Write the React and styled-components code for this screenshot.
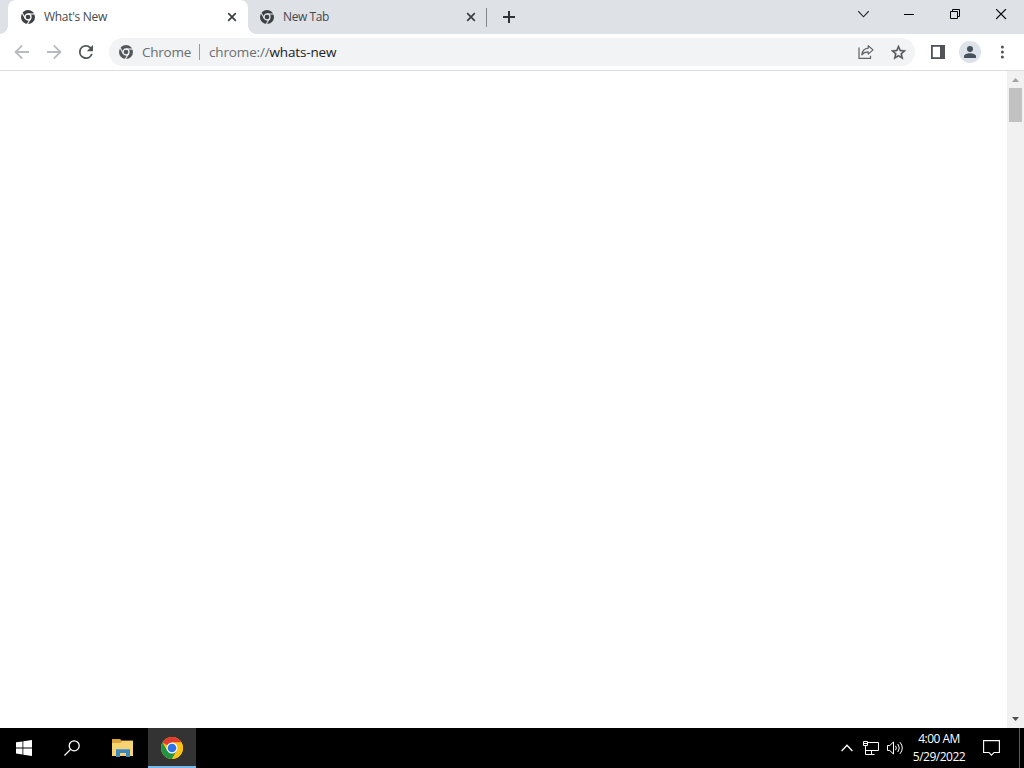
import React from 'react'
import styled, { createGlobalStyle } from 'styled-components'

const GlobalStyle = createGlobalStyle`
  * {
    box-sizing: border-box;
  }
  body {
    margin: 0;
    overflow: hidden;
    font-family: "Open Sans", "Noto Sans", sans-serif;
  }
  svg {
    display: block;
    flex: none;
  }
`

const Desktop = styled.div`
  width: 1024px;
  height: 768px;
  display: flex;
  flex-direction: column;
  background: #fff;
`
const TabStrip = styled.header`
  height: 34px;
  display: flex;
  background: #dee1e6;
`
const Tab = styled.div`
  position: relative;
  width: ${p => p.$width}px;
  height: 34px;
  display: flex;
  align-items: center;
  padding-left: ${p => (p.$active ? 13 : 12)}px;
  padding-right: ${p => (p.$active ? 11 : 10)}px;
  margin-left: ${p => (p.$active ? 8 : 0)}px;
  border-radius: 8px 8px 0 0;
  background: ${p => (p.$active ? '#fff' : 'transparent')};
`
const Foot = styled.span`
  position: absolute;
  bottom: 0;
  ${p => p.$side}: -8px;
  width: 8px;
  height: 8px;
  background: radial-gradient(circle at ${p => (p.$side === 'left' ? '0 0' : '100% 0')}, transparent 7.5px, #fff 8px);
`
const TabTitle = styled.span`
  flex: 1;
  margin-left: 9px;
  font-size: 12px;
  line-height: 16px;
  letter-spacing: ${p => p.$spacing}px;
  color: #45494d;
  white-space: nowrap;
`
const TabDivider = styled.span`
  width: 1px;
  height: 19px;
  margin-top: 8px;
  background: #85888c;
`
const NewTab = styled.button`
  width: 28px;
  height: 28px;
  margin: 3px 0 0 8px;
  padding: 0;
  border: 0;
  background: none;
  display: flex;
  align-items: center;
  justify-content: center;
`
const WindowControls = styled.div`
  margin-left: auto;
  height: 29px;
  display: flex;
`
const WindowButton = styled.button`
  width: 46px;
  padding: 0 0 0 1px;
  border: 0;
  background: none;
  display: flex;
  align-items: center;
  justify-content: center;
`
const Toolbar = styled.nav`
  height: 37px;
  display: flex;
  align-items: center;
  padding: 0 6px;
  border-bottom: 1px solid #dadce0;
  background: #fff;
`
const IconButton = styled.button`
  width: 32px;
  height: 28px;
  padding: 0;
  border: 0;
  background: none;
  display: flex;
  align-items: center;
  justify-content: center;
`
const AddressBar = styled.div`
  width: 806px;
  height: 28px;
  margin: 0 7px 0 7px;
  padding: 0 1px 0 10px;
  display: flex;
  align-items: center;
  border-radius: 14px;
  background: #f1f3f4;
  font-size: 13.5px;
  line-height: 20px;
  white-space: nowrap;
`
const Origin = styled.span`
  width: 49px;
  margin-left: 9px;
  color: #6a6e73;
  letter-spacing: -0.25px;
`
const Separator = styled.span`
  width: 1px;
  height: 16px;
  margin: 0 9px 0 8px;
  background: #989b9f;
`
const Url = styled.span`
  flex: 1;
  color: #6a6e73;
  letter-spacing: -0.15px;
  b {
    font-weight: 400;
    color: #202124;
  }
`
const Avatar = styled.span`
  width: 22px;
  height: 22px;
  border-radius: 50%;
  background: #dde3e9;
  display: flex;
  align-items: center;
  justify-content: center;
`
const Page = styled.main`
  flex: 1;
  display: flex;
  justify-content: flex-end;
`
const Scrollbar = styled.div`
  width: 17px;
  display: flex;
  flex-direction: column;
  align-items: center;
  background: #f1f1f1;
`
const ScrollArrow = styled.div`
  height: 17px;
  width: 17px;
  display: flex;
  align-items: center;
  justify-content: center;
`
const Thumb = styled.div`
  width: 13px;
  height: 34px;
  margin-bottom: auto;
  background: #c1c1c1;
`
const Taskbar = styled.footer`
  height: 40px;
  display: flex;
  background: #000;
  color: #fff;
`
const TaskButton = styled.div`
  width: ${p => p.$width || 48}px;
  display: flex;
  align-items: center;
  justify-content: center;
  padding-top: ${p => (p.$active ? 2 : 0)}px;
  background: ${p => (p.$active ? '#333' : 'transparent')};
  border-bottom: ${p => (p.$active ? '2px solid #76b9ed' : '0')};
`
const Tray = styled.div`
  margin-left: auto;
  display: flex;
  align-items: center;
`
const TrayIcon = styled.div`
  width: 24px;
  display: flex;
  justify-content: center;
`
const Clock = styled.div`
  width: 64px;
  text-align: center;
  font-size: 12px;
  line-height: 18px;
  letter-spacing: -0.5px;
`
const Notifications = styled.div`
  width: 48px;
  display: flex;
  justify-content: center;
  padding-right: 7px;
`
const ShowDesktop = styled.div`
  width: 5px;
  height: 40px;
  border-left: 1px solid #5c5c5c;
`

const ChromeMono = ({ color = '#3c4043', gap = '#fff' }) => (
  <svg width="14" height="14" viewBox="0 0 28 28" fill="none">
    <circle cx="14" cy="14" r="14" fill={color} />
    <circle cx="14" cy="14" r="6" stroke={gap} strokeWidth="2.6" />
    <g stroke={gap} strokeWidth="2.2">
      <path d="M14 8H28" />
      <path d="M14 8H28" transform="rotate(120 14 14)" />
      <path d="M14 8H28" transform="rotate(240 14 14)" />
    </g>
  </svg>
)

const ChromeColor = () => (
  <svg width="22" height="22" viewBox="0 0 48 48">
    <circle cx="24" cy="24" r="24" fill="#fbc116" />
    <path d="M24 24 3.22 12A24 24 0 0 1 44.78 12H24Z" fill="#e33b2e" />
    <path d="M3.22 12A24 24 0 0 0 24 48L34.39 30 24 24 13.61 30Z" fill="#229342" />
    <path d="M24 12H44.78A24 24 0 0 1 24 48L34.39 30Z" fill="#fbc116" />
    <circle cx="24" cy="24" r="12" fill="#fff" />
    <circle cx="24" cy="24" r="9.5" fill="#2f73e6" />
  </svg>
)

const TabClose = () => (
  <svg width="10" height="10" viewBox="0 0 10 10" fill="none" stroke="#3c4043" strokeWidth="1.7">
    <path d="m1.2 1.2 7.6 7.6M8.8 1.2 1.2 8.8" />
  </svg>
)

const Arrow = ({ flip }) => (
  <svg width="16" height="16" viewBox="0 0 16 16" fill="none" stroke="#b8babd" strokeWidth="1.8">
    <path d="M15 8H2M8.2 1.4 1.6 8l6.6 6.6" transform={flip ? 'rotate(180 8 8)' : undefined} />
  </svg>
)

export default function App() {
  return (
    <Desktop>
      <GlobalStyle />
      <TabStrip>
        <Tab $active $width={240}>
          <Foot $side="left" />
          <ChromeMono />
          <TabTitle $spacing={-0.3}>What's New</TabTitle>
          <TabClose />
          <Foot $side="right" />
        </Tab>
        <Tab $width={238}>
          <ChromeMono gap="#dee1e6" />
          <TabTitle $spacing={-0.4}>New Tab</TabTitle>
          <TabClose />
        </Tab>
        <TabDivider />
        <NewTab>
          <svg width="12" height="12" viewBox="0 0 12 12" fill="none" stroke="#303236" strokeWidth="2">
            <path d="M6 0v12M0 6h12" />
          </svg>
        </NewTab>
        <WindowControls>
          <WindowButton>
            <svg width="11" height="11" viewBox="0 0 11 11" fill="none" stroke="#222" strokeWidth="1.1">
              <path d="m.3 2.200 5.200 5.600 5.200-5.600" />
            </svg>
          </WindowButton>
          <WindowButton>
            <svg width="11" height="11" viewBox="0 0 11 11" fill="#000">
              <path d="M0 5h10v1H0z" />
            </svg>
          </WindowButton>
          <WindowButton>
            <svg width="11" height="11" viewBox="0 0 11 11" fill="none" stroke="#000">
              <path d="M.5 2.5h7v7h-7zM2.5 2.5v-2h7v7h-2" />
            </svg>
          </WindowButton>
          <WindowButton>
            <svg width="11" height="11" viewBox="0 0 11 11" fill="none" stroke="#000" strokeWidth="1.1">
              <path d="m0 0 10 10M10 0 0 10" />
            </svg>
          </WindowButton>
        </WindowControls>
      </TabStrip>

      <Toolbar>
        <IconButton><Arrow /></IconButton>
        <IconButton><Arrow flip /></IconButton>
        <IconButton>
          <svg width="14" height="14" viewBox="4 4 16 16" fill="#505458">
            <path d="M17.65 6.35A7.96 7.96 0 0 0 12 4a8 8 0 1 0 7.73 10h-2.08A6 6 0 1 1 12 6c1.66 0 3.14.69 4.22 1.78L13 11h7V4z" />
          </svg>
        </IconButton>
        <AddressBar>
          <ChromeMono color="#54585d" gap="#f1f3f4" />
          <Origin>Chrome</Origin>
          <Separator />
          <Url>chrome://<b>whats-new</b></Url>
          <IconButton>
            <svg width="16" height="16" viewBox="0 0 16 16" fill="none" stroke="#5f6368" strokeWidth="1.2">
              <path d="M1 3.600v10.800h11.500v-2.700" />
              <path d="M10.200 1.700 15 5.900l-4.800 4.200V7.800c-3 0-4.800.8-6.400 3 .5-3.800 2.700-6.200 6.400-6.600z" strokeLinejoin="round" />
            </svg>
          </IconButton>
          <IconButton>
            <svg width="15" height="15" viewBox="2 2 20 20" fill="#505458" stroke="#505458" strokeWidth="0.5">
              <path d="m22 9.240-7.190-.620L12 2 9.190 8.630 2 9.240l5.460 4.730L5.820 21 12 17.270 18.180 21l-1.630-7.030zM12 15.400l-3.760 2.270 1-4.280-3.320-2.880 4.380-.380L12 6.100l1.710 4.040 4.380.380-3.320 2.880 1 4.280z" />
            </svg>
          </IconButton>
        </AddressBar>
        <IconButton>
          <svg width="14" height="14" viewBox="0 0 14 14">
            <path d="M0 0h14v14H0z" fill="#505458" />
            <path d="M1.800 1.800H9v10.400H1.800z" fill="#fff" />
          </svg>
        </IconButton>
        <IconButton>
          <Avatar>
            <svg width="12" height="12" viewBox="0 0 12 12" fill="#47515d">
              <circle cx="6" cy="3" r="3" />
              <path d="M0 12v-1.600C0 8.300 3.400 7.300 6 7.300s6 1 6 3.100V12z" />
            </svg>
          </Avatar>
        </IconButton>
        <IconButton>
          <svg width="4" height="14" viewBox="0 0 4 14" fill="#505458">
            <circle cx="2.4" cy="2" r="1.5" />
            <circle cx="2.4" cy="7" r="1.5" />
            <circle cx="2.4" cy="12" r="1.5" />
          </svg>
        </IconButton>
      </Toolbar>

      <Page>
        <Scrollbar>
          <ScrollArrow>
            <svg width="7" height="4" viewBox="0 0 7 4" fill="#a3a3a3"><path d="M0 4 3.5 0 7 4z" /></svg>
          </ScrollArrow>
          <Thumb />
          <ScrollArrow>
            <svg width="7" height="5" viewBox="0 0 7 5" fill="#505050"><path d="M0 0h7L3.5 4z" /></svg>
          </ScrollArrow>
        </Scrollbar>
      </Page>

      <Taskbar>
        <TaskButton>
          <svg width="16" height="16" viewBox="0 0 16 16" fill="#fff">
            <path d="M0 2.3 6.5 1.4v6.1H0zM7.3 1.3 16 0v7.5H7.3zM0 8.4h6.5v6.1L0 13.6zM7.3 8.4H16V16l-8.700-1.300z" />
          </svg>
        </TaskButton>
        <TaskButton>
          <svg width="16" height="16" viewBox="0 0 16 16" fill="none" stroke="#fff" strokeWidth="1.3">
            <circle cx="10.2" cy="5.8" r="5" />
            <path d="M6.6 9.4.5 15.5" />
          </svg>
        </TaskButton>
        <TaskButton $width={52}>
          <svg width="22" height="18" viewBox="-1 0 22 18">
            <path d="M0 0h8l1.500 1.500H21V17H0z" fill="#dda63a" />
            <path d="M0 4h8.500L10.500 2H21v15H0z" fill="#f7d372" />
            <path d="M4 10h14v8h-4v-4H8v4H4z" fill="#3f87bd" />
            <path d="M4 10h14v1H4z" fill="#639fc8" />
          </svg>
        </TaskButton>
        <TaskButton $active>
          <ChromeColor />
        </TaskButton>
        <Tray>
          <TrayIcon>
            <svg width="12" height="8" viewBox="0 0 12 8" fill="none" stroke="#fff" strokeWidth="1.3">
              <path d="m.6 7 5.400-5.700L11.400 7" />
            </svg>
          </TrayIcon>
          <TrayIcon>
            <svg width="16" height="14" viewBox="0 0 16 14" fill="none" stroke="#fff">
              <path d="M4.500 1.500h11v8h-13M.5.500h4v4h-4zM2.500 4.500v9M8.500 9.500v4M2.500 13.500h9M.5 2.500h4" />
            </svg>
          </TrayIcon>
          <TrayIcon>
            <svg width="17" height="14" viewBox="0 0 17 14" fill="none" stroke="#fff">
              <path d="M.5 4.500h2.300L6.500 1v12L2.800 9.500H.5zM8.500 4.800q1.700 2.200 0 4.400M10.800 3q3 4 0 8M13 1.200q4.600 5.800 0 11.600" />
            </svg>
          </TrayIcon>
          <Clock>
            <div>4:00 AM</div>
            <div>5/29/2022</div>
          </Clock>
          <Notifications>
            <svg width="17" height="16" viewBox="0 0 17 16" fill="none" stroke="#fff" strokeWidth="1.1">
              <path d="M.6.600h15.800v11.900H11l-2.500 2.700L6 12.500H.6z" />
            </svg>
          </Notifications>
          <ShowDesktop />
        </Tray>
      </Taskbar>
    </Desktop>
  )
}
